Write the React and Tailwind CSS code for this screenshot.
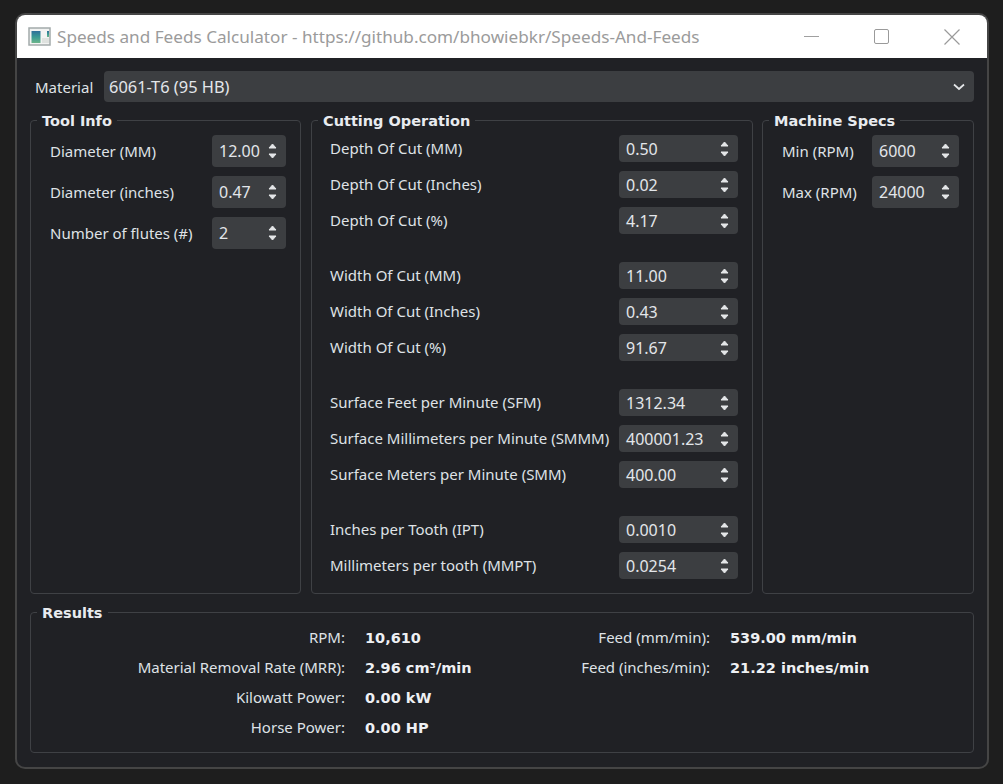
const font = { fontFamily: '"Noto Sans", sans-serif' };
const boldFont = { fontFamily: '"DejaVu Sans", sans-serif' };

function SpinArrows() {
    return (
        <svg width="9" height="16" viewBox="0 0 9 16" className="shrink-0">
            <path d="M4.5 1 L8 5 L1 5 Z" fill="#e4e6e8" stroke="#e4e6e8" strokeLinejoin="round" />
            <path d="M4.5 15 L8 11 L1 11 Z" fill="#e4e6e8" stroke="#e4e6e8" strokeLinejoin="round" />
        </svg>
    );
}

function SpinBox({ value, className }) {
    return (
        <div className={`flex items-center justify-between pl-[7px] pr-[9px] bg-[#3c3e41] rounded-[4px] text-[16px] text-[#e3e6ea] ${className}`}>
            <span>{value}</span>
            <SpinArrows />
        </div>
    );
}

function Group({ title, className, children }) {
    return (
        <div className={`relative border border-[#3f4145] rounded-[4px] ${className}`}>
            <span className="absolute left-[6px] top-[-9px] px-[5px] bg-[#202125] font-bold text-[14.5px] leading-[18px] text-[#e8ebef]" style={boldFont}>{title}</span>
            {children}
        </div>
    );
}

function Row({ label, value, boxClass, labelClass = "" }) {
    return (
        <div className="flex items-center justify-between">
            <span className={`text-[#dfe2e6] ${labelClass}`}>{label}</span>
            <SpinBox value={value} className={boxClass} />
        </div>
    );
}

const cutting = [
    [["Depth Of Cut (MM)", "0.50"], ["Depth Of Cut (Inches)", "0.02"], ["Depth Of Cut (%)", "4.17"]],
    [["Width Of Cut (MM)", "11.00"], ["Width Of Cut (Inches)", "0.43"], ["Width Of Cut (%)", "91.67"]],
    [["Surface Feet per Minute (SFM)", "1312.34"], ["Surface Millimeters per Minute (SMMM)", "400001.23"], ["Surface Meters per Minute (SMM)", "400.00"]],
    [["Inches per Tooth (IPT)", "0.0010"], ["Millimeters per tooth (MMPT)", "0.0254"]],
];

const results = [
    ["RPM:", "10,610", "Feed (mm/min):", "539.00 mm/min"],
    ["Material Removal Rate (MRR):", "2.96 cm³/min", "Feed (inches/min):", "21.22 inches/min"],
    ["Kilowatt Power:", "0.00 kW", "", ""],
    ["Horse Power:", "0.00 HP", "", ""],
];

export default function App() {
    return (
        <div className="w-[1003px] h-[784px] bg-[#1e1e1e] pl-[15px] pt-[13px] overflow-hidden text-[15px] leading-[20px]" style={font}>
            <div className="w-[974px] h-[756px] border-2 border-[#454545] rounded-[10px] overflow-hidden bg-[#202125] flex flex-col">
                {/* Title bar */}
                <div className="h-[43px] bg-white flex items-center shrink-0 pl-[11px]">
                    <svg width="24" height="20" viewBox="0 0 24 20" className="shrink-0">
                        <defs>
                            <linearGradient id="iconPanel" x1="0" y1="0" x2="0" y2="1">
                                <stop offset="0" stopColor="#2f6f9a" />
                                <stop offset="0.5" stopColor="#3a9a94" />
                                <stop offset="1" stopColor="#6cb58a" />
                            </linearGradient>
                        </defs>
                        <rect x="1" y="1" width="21" height="17" fill="#f2f3f2" stroke="#a3aaaa" strokeWidth="1.5" />
                        <rect x="3.5" y="4" width="9" height="12" fill="url(#iconPanel)" />
                        <rect x="14" y="11" width="7" height="5" fill="#dfe2df" />
                        <rect x="19" y="4" width="2" height="6" fill="url(#iconPanel)" />
                    </svg>
                    <span className="ml-[5px] text-[17.15px] text-[#9b9b9b]">Speeds and Feeds Calculator - https://github.com/bhowiebkr/Speeds-And-Feeds</span>
                    <div className="ml-auto flex items-center pr-[27px] gap-[55px]">
                        <div className="w-[15px] h-px bg-[#a0a0a0]" />
                        <div className="w-[15px] h-[15px] border-[1.5px] border-[#9a9a9a] rounded-[2px]" />
                        <svg width="16" height="16" viewBox="0 0 16 16">
                            <path d="M0.5 0.5 L15.5 15.5 M15.5 0.5 L0.5 15.5" stroke="#9a9a9a" strokeWidth="1.2" />
                        </svg>
                    </div>
                </div>

                <div className="flex-1 px-[13px] pt-[13px] flex flex-col">
                    {/* Material */}
                    <div className="flex items-center pl-[5px] h-[31px]">
                        <span className="w-[69px] shrink-0 text-[#dfe2e6]">Material</span>
                        <div className="flex-1 h-full bg-[#3c3e41] rounded-[4px] flex items-center justify-between pl-[5px] pr-[9px] text-[16.4px] text-[#e3e6ea]">
                            <span>6061-T6 (95 HB)</span>
                            <svg width="12" height="8" viewBox="0 0 12 8">
                                <path d="M1 1.5 L6 6 L11 1.5" fill="none" stroke="#e4e6e8" strokeWidth="1.7" />
                            </svg>
                        </div>
                    </div>

                    <div className="flex mt-[18px] h-[474px] gap-[10px]">
                        <Group title="Tool Info" className="w-[271px] pl-[19px] pr-[14px] pt-[14px] flex flex-col gap-[9px]">
                            <Row label="Diameter (MM)" value="12.00" boxClass="w-[74px] h-[32px]" />
                            <Row label="Diameter (inches)" value="0.47" boxClass="w-[74px] h-[32px]" />
                            <Row label="Number of flutes (#)" value="2" boxClass="w-[74px] h-[32px]" />
                        </Group>

                        <Group title="Cutting Operation" className="w-[442px] pl-[18px] pr-[14px] pt-[14px] flex flex-col gap-[28px]">
                            {cutting.map((section, i) => (
                                <div key={i} className="flex flex-col gap-[9px]">
                                    {section.map(([label, value]) => (
                                        <Row key={label} label={label} value={value} boxClass="w-[119px] h-[27px]" labelClass="pb-[2px]" />
                                    ))}
                                </div>
                            ))}
                        </Group>

                        <Group title="Machine Specs" className="w-[212px] ml-[-1px] pl-[19px] pr-[14px] pt-[14px] flex flex-col gap-[9px]">
                            <Row label="Min (RPM)" value="6000" boxClass="w-[87px] h-[32px]" />
                            <Row label="Max (RPM)" value="24000" boxClass="w-[87px] h-[32px]" />
                        </Group>
                    </div>

                    {/* Results */}
                    <Group title="Results" className="mt-[18px] h-[141px] pt-[9px]">
                        <div className="grid grid-cols-[314px_365px_1fr] auto-rows-[30px] items-center text-[#dfe2e6]">
                            {results.map(([a, b, c, d]) => (
                                <div key={a} className="contents">
                                    <span className="text-right">{a}</span>
                                    <div className="flex items-center">
                                        <span className="w-[186px] pl-[20px] pt-[1px] font-bold text-[14.5px] text-[#eef0f3] whitespace-nowrap" style={boldFont}>{b}</span>
                                        <span className="w-[180px] text-right whitespace-nowrap">{c}</span>
                                    </div>
                                    <span className="pl-[20px] pt-[1px] font-bold text-[14.5px] text-[#eef0f3] whitespace-nowrap" style={boldFont}>{d}</span>
                                </div>
                            ))}
                        </div>
                    </Group>
                </div>
            </div>
        </div>
    );
}
